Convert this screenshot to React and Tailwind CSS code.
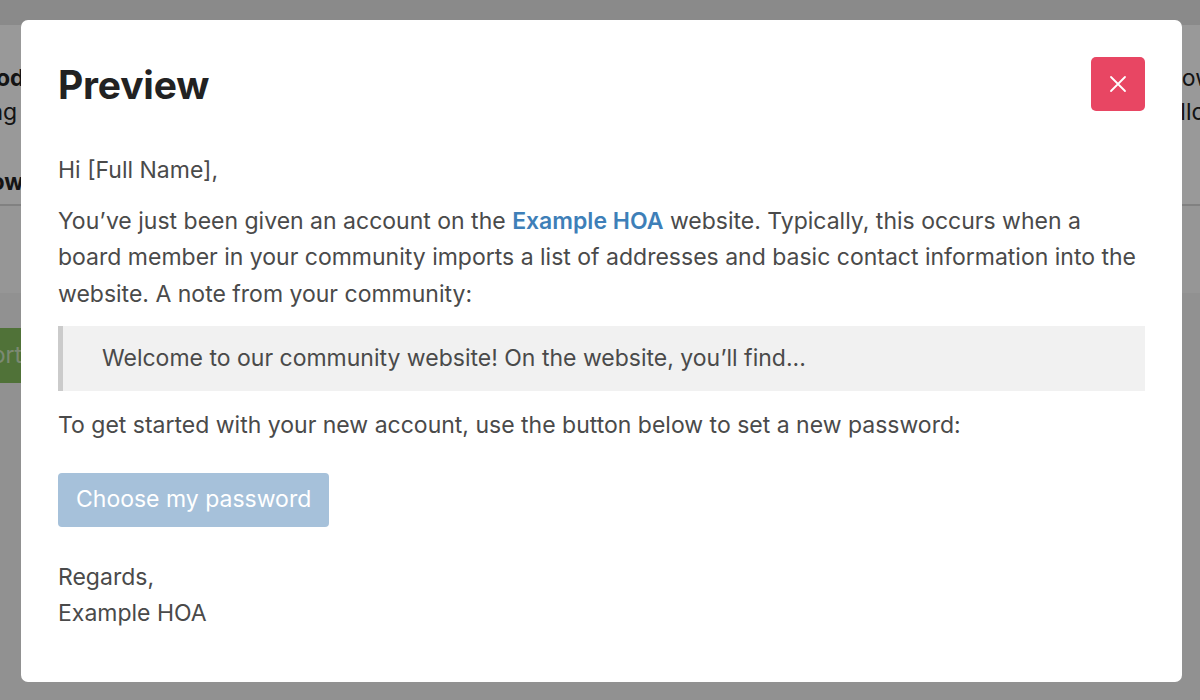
import React from 'react';

const font = { fontFamily: 'Inter, "Liberation Sans", Arial, sans-serif' };

function BackgroundPage() {
  return (
    <div className="h-[700px] w-[1200px] bg-white overflow-hidden flex flex-col" style={font}>
      <div className="h-[25px] bg-[#e6e6e6]" />
      <div className="h-[181px] flex justify-between border-b-2 border-[#d8d8d8]">
        <div className="pt-[36px] text-[23px] text-[#222] leading-[34px]">
          <div className="-ml-[62px] font-bold">Method</div>
          <div className="-ml-[72px]">Sending</div>
          <div className="-ml-[49px] mt-[36px] font-bold">Follow</div>
        </div>
        <div className="pt-[36px] text-[23px] text-[#222] leading-[34px]">
          <div className="mr-[-14px]">Now</div>
          <div className="mr-[-16px]">Allo</div>
        </div>
      </div>
      <div className="h-[87px] bg-[#fbfbfb]" />
      <div className="flex-1 bg-[#f2f2f2] pt-[35px]">
        <div className="-ml-[60px] w-[100px] h-[55px] bg-[#85bf5e] text-[#cfe5c0] text-[23px] flex items-center justify-end pr-[18px]">
          Import
        </div>
      </div>
    </div>
  );
}

export default function App() {
  return (
    <div className="relative w-[1200px] h-[700px] overflow-hidden">
      <BackgroundPage />
      {/* Overlay */}
      <div className="absolute inset-0 bg-black/[0.4]" />
      {/* Modal */}
      <div
        className="absolute left-[21px] top-[20px] w-[1161px] h-[662px] bg-white rounded-[7px] px-[37px] pt-[37px]"
        style={font}
      >
        <div className="flex items-center justify-between h-[54px]">
          <h2 className="text-[39px] font-bold text-[#222] leading-none tracking-[-0.2px]">Preview</h2>
          <button className="w-[54px] h-[54px] rounded-[5px] bg-[#e84663] flex items-center justify-center">
            <svg width="18" height="18" viewBox="0 0 18 18" fill="none" stroke="white" strokeWidth="1.8" strokeLinecap="round">
              <path d="M2 2L16 16M16 2L2 16" />
            </svg>
          </button>
        </div>

        <div className="text-[23px] leading-[36.5px] text-[#4a4a4a] mt-[41px]">
          <p>Hi [Full Name],</p>
          <p className="mt-[14px]">
            You’ve just been given an account on the{' '}
            <span className="font-semibold text-[#3e7fb8]">Example HOA</span> website. Typically, this occurs when a
            board member in your community imports a list of addresses and basic contact information into the
            website. A note from your community:
          </p>
          <div className="mt-[14px] h-[65px] bg-[#f1f1f1] border-l-[5px] border-[#cbcbcb] flex items-center pl-[39px]">
            Welcome to our community website! On the website, you’ll find...
          </div>
          <p className="mt-[16px]">
            To get started with your new account, use the button below to set a new password:
          </p>
          <div className="mt-[29px]">
            <span className="inline-flex items-center h-[54px] px-[18px] rounded-[4px] bg-[#a6c1da] text-white">
              Choose my password
            </span>
          </div>
          <p className="mt-[32px]">
            Regards,
            <br />
            Example HOA
          </p>
        </div>
      </div>
    </div>
  );
}
